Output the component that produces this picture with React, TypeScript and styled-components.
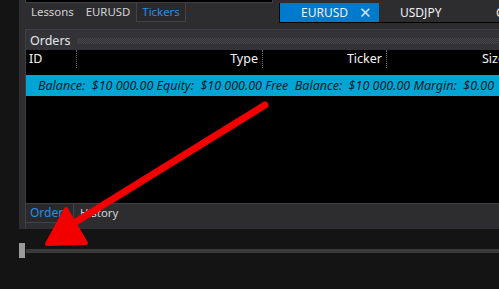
import React from "react";
import styled, { createGlobalStyle } from "styled-components";

const Global = createGlobalStyle`
  html, body { margin: 0; padding: 0; background: #141414; overflow: hidden; }
  body { font-family: "Segoe UI", "Noto Sans", "Open Sans", sans-serif; font-size: 12px; }
`;

const Page = styled.div`
  position: relative;
  width: 499px;
  height: 289px;
  background: #141414;
  overflow: hidden;
  display: flex;
  flex-direction: column;
`;

const Frame = styled.div`
  margin-left: 19px;
  height: 229px;
  background: #2d2d30;
  padding-left: 6px;
  display: flex;
  flex-direction: column;
  box-sizing: border-box;
`;

const TopRow = styled.div`
  display: flex;
  align-items: flex-start;
  height: 29px;
`;

const LeftCol = styled.div`
  width: 248px;
  display: flex;
  flex-direction: column;
`;

const BlackStrip = styled.div`
  background: #000;
  border: 1px solid #3f3f46;
  border-top: none;
  box-sizing: border-box;
  height: 4px;
  margin-top: -1px;
`;

const TabRow = styled.div`
  display: flex;
  height: 19px;
`;

const Tab = styled.div<{ $active?: boolean }>`
  padding: 0 5px 0 5px;
  height: 19px;
  line-height: 18px;
  font-size: 11.4px;
  box-sizing: border-box;
  color: ${(p) => (p.$active ? "#2a8ee0" : "#d4d4d4")};
  background: ${(p) => (p.$active ? "#29292c" : "transparent")};
  border: 1px solid ${(p) => (p.$active ? "#434347" : "transparent")};
  border-top: none;
  white-space: nowrap;
`;

const DocStrip = styled.div`
  margin-left: 6px;
  margin-top: 3px;
  flex: 1;
  height: 20px;
  display: flex;
  border-left: 1px solid #000;
  border-bottom: 1px solid #000;
  box-sizing: border-box;
  background: #2d2d30;
  white-space: nowrap;
  overflow: hidden;
`;

const DocTab = styled.div<{ $active?: boolean; $w: number }>`
  flex: none;
  width: ${(p) => p.$w}px;
  height: 19px;
  display: flex;
  align-items: center;
  padding-left: 21px;
  box-sizing: border-box;
  background: ${(p) => (p.$active ? "#007acc" : "transparent")};
  color: #f1f1f1;
  line-height: 19px;
`;

const Close = styled.span`
  margin-left: auto;
  margin-right: 7px;
  font-size: 15px;
  color: #d0e4f5;
  line-height: 19px;
`;

const Panel = styled.div`
  flex: 1;
  display: flex;
  flex-direction: column;
  border-left: 1px solid #3f3f46;
  border-top: 1px solid #3f3f46;
  margin-right: -10px;
`;

const PanelHeader = styled.div`
  height: 20px;
  background: #333337;
  display: flex;
  align-items: center;
  padding-left: 4px;
  color: #e6e6e6;
  font-size: 12.5px;
`;

const Grip = styled.div`
  flex: 1;
  height: 6px;
  margin-left: 6px;
  margin-top: 1px;
  background: repeating-conic-gradient(#46464b 0 25%, transparent 0 50%) 0 0 / 2px 2px;
`;

const Body = styled.div`
  height: 153px;
  background: #000;
  display: flex;
  flex-direction: column;
`;

const HeadRow = styled.div`
  display: grid;
  grid-template-columns: 51px 186px 124px 1fr;
  height: 18px;
  color: #f4f4f4;
  font-size: 12.5px;
`;

const HeadCell = styled.div<{ $align?: string }>`
  text-align: ${(p) => p.$align || "right"};
  padding: 0 4px 0 3px;
  line-height: 18px;
  white-space: nowrap;
  overflow: hidden;
  border-right: 1px dotted #6a6a6a;
`;

const SizeCell = styled(HeadCell)`
  border-right: none;
  padding-left: 95px;
  text-align: left;
`;

const InfoRow = styled.div`
  margin-top: 7px;
  height: 21px;
  background: #00a5d6;
  color: #0b1c2a;
  font-style: italic;
  line-height: 21px;
  padding-left: 12px;
  white-space: pre;
  overflow: hidden;
  font-size: 12.5px;
`;

const BottomBar = styled.div`
  height: 26px;
  border-top: 1px solid #3f3f46;
  display: flex;
  box-sizing: border-box;
`;

const BottomTab = styled(Tab)<{ $active?: boolean }>`
  height: 19px;
  font-size: 12px;
  padding: 0 4px 0 4px;
  margin-left: -1px;
`;

const Slider = styled.div`
  display: flex;
  align-items: center;
  margin-top: 14px;
  height: 15px;
  padding-left: 19px;
`;

const Thumb = styled.div`
  width: 6px;
  height: 15px;
  background: #9a9a9a;
`;

const Track = styled.div`
  flex: 1;
  height: 4px;
  margin-left: 1px;
  background: #3a3a3a;
`;

const Overlay = styled.svg`
  position: absolute;
  left: 0;
  top: 0;
  pointer-events: none;
`;

export default function App() {
  return (
    <Page>
      <Global />
      <Frame>
        <TopRow>
          <LeftCol>
            <BlackStrip />
            <TabRow>
              <Tab>Lessons</Tab>
              <Tab>EURUSD</Tab>
              <Tab $active>Tickers</Tab>
            </TabRow>
          </LeftCol>
          <DocStrip>
            <DocTab $active $w={99}>
              EURUSD<Close>✕</Close>
            </DocTab>
            <DocTab $w={96}>USDJPY</DocTab>
            <DocTab $w={60}>GBPUSD</DocTab>
          </DocStrip>
        </TopRow>
        <Panel>
          <PanelHeader>
            Orders
            <Grip />
          </PanelHeader>
          <Body>
            <HeadRow>
              <HeadCell $align="left">ID</HeadCell>
              <HeadCell>Type</HeadCell>
              <HeadCell>Ticker</HeadCell>
              <SizeCell>Size</SizeCell>
            </HeadRow>
            <InfoRow>
              {"Balance:  $10 000.00 Equity:  $10 000.00 Free  Balance:  $10 000.00 Margin:  $0.00"}
            </InfoRow>
          </Body>
          <BottomBar>
            <BottomTab $active>Orders</BottomTab>
            <Tab>History</Tab>
          </BottomBar>
        </Panel>
      </Frame>
      <Slider>
        <Thumb />
        <Track />
      </Slider>
      <Overlay width={499} height={289} viewBox="0 0 499 289">
        <g fill="#f20000" stroke="#f20000" strokeLinejoin="round" strokeLinecap="round">
          <line x1={265} y1={105} x2={74} y2={223} strokeWidth={7} />
          <polygon points="47,244 66,209 86,243" strokeWidth={4} />
        </g>
      </Overlay>
    </Page>
  );
}
